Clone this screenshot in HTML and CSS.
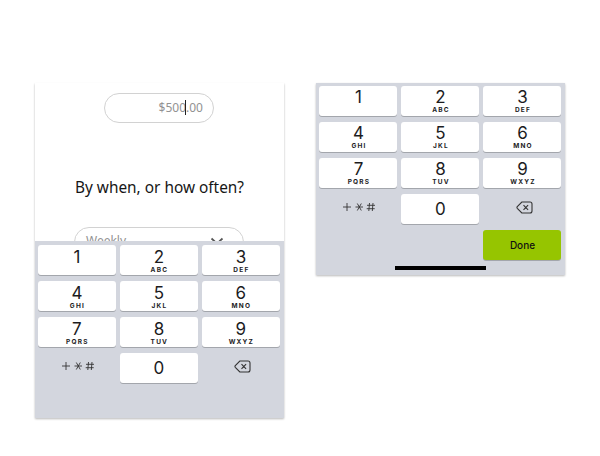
FILE: index.html
```html
<!DOCTYPE html>
<html lang="en">
<head>
<meta charset="utf-8">
<title>Savings goal</title>
<link rel="stylesheet" href="styles.css">
</head>
<body>
<main class="board">
  <section class="phone">
    <div class="form">
      <div class="amount"><span>$500</span><i class="caret"></i><span>.00</span></div>
      <h1 class="question">By when, or how often?</h1>
      <div class="select"><span>Weekly</span>
        <svg class="chevron" width="14" height="9" viewBox="0 0 14 9"><path d="M1.500 1.500 7 6.500l5.500-5"/></svg>
      </div>
    </div>
    <div class="keys">
      <div class="key"><b>1</b></div>
      <div class="key"><b>2</b><small>ABC</small></div>
      <div class="key"><b>3</b><small>DEF</small></div>
      <div class="key"><b>4</b><small>GHI</small></div>
      <div class="key"><b>5</b><small>JKL</small></div>
      <div class="key"><b>6</b><small>MNO</small></div>
      <div class="key"><b>7</b><small>PQRS</small></div>
      <div class="key"><b>8</b><small>TUV</small></div>
      <div class="key"><b>9</b><small>WXYZ</small></div>
      <div class="plain"><svg class="symbols" width="34" height="10" viewBox="0 0 34 10"><path d="M1 5h8M5 1v8M13.500 5h7.500M15.300 1.500l4 7M19.300 1.500l-4 7M25 3.300h8M24.700 6.700h8M27.500 1l-.7 8M31 1l-.7 8"/></svg></div>
      <div class="key zero"><b>0</b></div>
      <div class="plain"><svg class="delete" width="17" height="13" viewBox="0 0 17 13"><path d="M5.800 1H14a2 2 0 0 1 2 2v7a2 2 0 0 1-2 2H5.800L1.300 7.300a1.200 1.200 0 0 1 0-1.600ZM7.500 4.200l4.600 4.600M12.100 4.200 7.500 8.800"/></svg></div>
    </div>
  </section>
  <section class="pad">
    <div class="keys">
      <div class="key"><b>1</b></div>
      <div class="key"><b>2</b><small>ABC</small></div>
      <div class="key"><b>3</b><small>DEF</small></div>
      <div class="key"><b>4</b><small>GHI</small></div>
      <div class="key"><b>5</b><small>JKL</small></div>
      <div class="key"><b>6</b><small>MNO</small></div>
      <div class="key"><b>7</b><small>PQRS</small></div>
      <div class="key"><b>8</b><small>TUV</small></div>
      <div class="key"><b>9</b><small>WXYZ</small></div>
      <div class="plain"><svg class="symbols" width="34" height="10" viewBox="0 0 34 10"><path d="M1 5h8M5 1v8M13.500 5h7.500M15.300 1.500l4 7M19.300 1.500l-4 7M25 3.300h8M24.700 6.700h8M27.500 1l-.7 8M31 1l-.7 8"/></svg></div>
      <div class="key zero"><b>0</b></div>
      <div class="plain"><svg class="delete" width="17" height="13" viewBox="0 0 17 13"><path d="M5.800 1H14a2 2 0 0 1 2 2v7a2 2 0 0 1-2 2H5.800L1.300 7.300a1.200 1.200 0 0 1 0-1.600ZM7.500 4.200l4.600 4.600M12.100 4.200 7.500 8.800"/></svg></div>
      <div class="key done">Done</div>
    </div>
    <div class="home"></div>
  </section>
</main>
</body>
</html>
```
FILE: styles.css
```css
* { box-sizing: border-box; }
body {
  margin: 0;
  background: #fff;
  font-family: Inter, "Liberation Sans", sans-serif;
  color: #1c1c1e;
}
.board {
  display: flex;
  align-items: flex-start;
  gap: 31.600px;
  height: 456px;
  padding: 82.600px 0 0 34.600px;
}
.phone {
  width: 249.800px;
  height: 335.400px;
  background: #fff;
  box-shadow: 0 1px 2px rgba(0, 0, 0, .28);
  clip-path: inset(0 -3px -4px -3px);
}
.form {
  display: flex;
  flex-direction: column;
  align-items: center;
  height: 158.400px;
  padding-top: 10.400px;
  overflow: hidden;
  font-family: "Noto Sans", sans-serif;
}
.amount {
  flex: none;
  display: flex;
  align-items: center;
  justify-content: flex-end;
  width: 110px;
  height: 30px;
  margin-right: 1px;
  padding: 0 10px 1px 0;
  border: 1px solid #d2d2d2;
  border-radius: 15px;
  color: #929292;
  font-size: 12px;
}
.caret {
  width: 1px;
  height: 15px;
  margin: 0 0 0 -1px;
  background: #222;
}
.question {
  flex: none;
  margin: 55px 0 0;
  font-size: 15.400px;
  line-height: 20px;
  font-weight: 400;
  color: #161616;
  white-space: nowrap;
}
.select {
  flex: none;
  display: flex;
  justify-content: space-between;
  width: 170px;
  height: 30px;
  margin: 29px 1px 0 0;
  padding: 4px 19px 0 11px;
  border: 1px solid #d2d2d2;
  border-radius: 15px;
  color: #929292;
  font-size: 12px;
  line-height: 18px;
}
.chevron {
  margin-top: 5px;
  fill: none;
  stroke: #555;
  stroke-width: 1.800;
}
.keys {
  display: grid;
  grid-template-columns: repeat(3, 78px);
  grid-auto-rows: 30.500px;
  gap: 5.500px 4px;
  padding: 4px 0 0 3.300px;
  background: #d3d6de;
}
.phone .keys { height: 177px; }
.key {
  display: flex;
  flex-direction: column;
  align-items: center;
  background: #fff;
  border-radius: 3px;
  box-shadow: 0 1px 0 #a3a6ac;
}
.key b {
  height: 20px;
  padding-top: 1px;
  font-size: 17px;
  line-height: 20px;
  font-weight: 400;
}
.key small {
  padding: 0 0 0 1px;
  font-size: 6.500px;
  line-height: 8px;
  font-weight: 700;
  letter-spacing: 1.200px;
}
.phone .key { padding-top: 1px; }
.zero b { padding-top: 5px; }
.phone .zero b { padding-top: 4px; }
.plain {
  display: flex;
  align-items: center;
  justify-content: center;
  padding: 0 0 3px 4px;
}
.plain:has(.symbols) { padding: 0 0 5px 2px; }
.symbols, .delete {
  fill: none;
  stroke: #333;
  stroke-width: .9;
}
.delete { stroke-width: 1.100; }
.pad {
  width: 249.500px;
  height: 192.600px;
  background: #d3d6de;
  box-shadow: 0 1px 2px rgba(0, 0, 0, .28);
}
.pad .keys { padding: 3.300px 0 0 3.500px; }
.done {
  grid-column: 3;
  justify-content: center;
  background: #96c500;
  color: #111;
  font-size: 10px;
  font-weight: 500;
}
.home {
  width: 90.500px;
  height: 4px;
  margin: 6px 0 0 79.400px;
  background: #000;
}
```
